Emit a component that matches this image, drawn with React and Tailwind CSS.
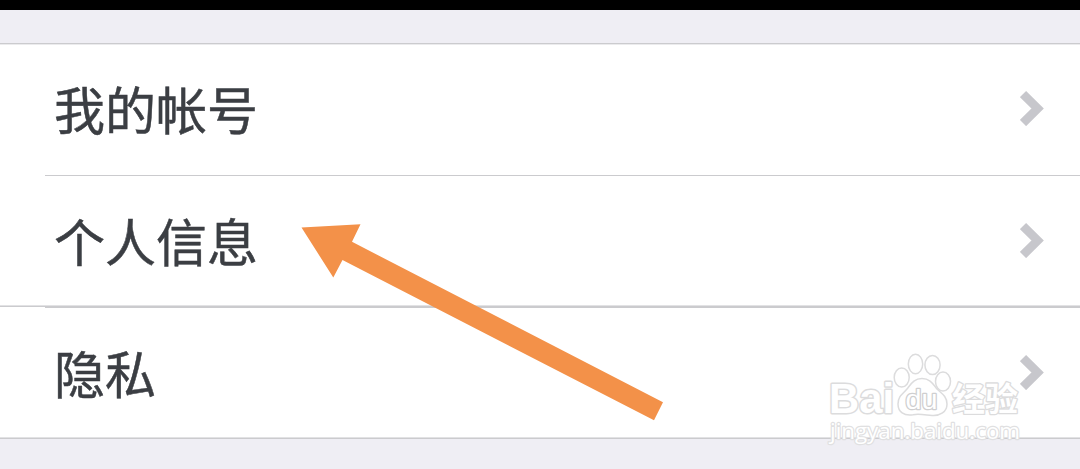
import React from "react";

const Chevron = () => (
  <svg className="h-9 w-6 mr-9 shrink-0 -mt-px" viewBox="0 0 24 36" fill="none">
    <path d="M3 4L17.6 18.5L3 33" stroke="#c7c7cc" strokeWidth="8.8" />
  </svg>
);

const Row = ({ label }) => (
  <div className="flex flex-1 items-center justify-between pl-[54px] text-[51px] leading-none text-[#3b3e43]">
    <span className="-mt-px [-webkit-text-stroke:0.5px_#3b3e43]">{label}</span>
    <Chevron />
  </div>
);

const Arrow = () => (
  <svg
    className="absolute left-[290px] top-[215px] h-[215px] w-[385px]"
    viewBox="290 215 385 215"
  >
    <path
      d="M301.5 227.5L360.5 224.3L352 241.8L663 402.3L654 420.3L342.5 260L333.3 277.5Z"
      fill="#f39149"
    />
  </svg>
);

const Watermark = () => (
  <svg
    className="absolute left-[820px] top-[345px] h-[110px] w-[210px]"
    viewBox="820 345 210 110"
    fill="#fff"
    stroke="#dcdcdd"
    strokeWidth="1.5"
    strokeLinejoin="round"
  >
    <ellipse cx="901.7" cy="377.5" rx="7.5" ry="9.5" />
    <ellipse cx="915.5" cy="364" rx="7.2" ry="9.7" />
    <ellipse cx="932.5" cy="365" rx="7.6" ry="9.5" />
    <ellipse cx="943" cy="381.5" rx="7.5" ry="9.5" />
    <path d="M922 378.5C930 378.5 933 384 937 389C941 393 947 396 947 404C947 412 940 416 932 415.4C926 415 919 413.5 913 414.7C904 416 898 412 898 404C898 396 903 394 907 389C911 384 914 378.5 922 378.5Z" />
    <text
      x="829"
      y="413"
      fontSize="42"
      fontWeight="700"
      textLength="65"
      lengthAdjust="spacingAndGlyphs"
      fontFamily="'Liberation Sans', Arial, sans-serif"
      strokeWidth="3"
      paintOrder="stroke"
    >
      Bai
    </text>
    <text
      x="905.5"
      y="408.5"
      fontSize="28"
      textLength="32"
      lengthAdjust="spacingAndGlyphs"
      fontFamily="'Liberation Sans', Arial, sans-serif"
      stroke="#cfcfd0"
      strokeWidth="2.6"
      paintOrder="stroke"
    >
      du
    </text>
    <text
      x="952"
      y="411"
      fontSize="33"
      fontWeight="700"
      fontFamily="'Noto Sans CJK SC', sans-serif"
      strokeWidth="2.6"
      paintOrder="stroke"
    >
      经验
    </text>
    <text
      x="830"
      y="439"
      fontSize="22.5"
      textLength="190"
      lengthAdjust="spacingAndGlyphs"
      fontFamily="'Open Sans', sans-serif"
      stroke="#e0e0e1"
      strokeWidth="2.4"
      paintOrder="stroke"
    >
      jingyan.baidu.com
    </text>
  </svg>
);

const App = () => {
  return (
    <main className="relative flex h-[469px] w-full flex-col overflow-hidden bg-[#efeef4] font-['Noto_Sans_CJK_SC',sans-serif]">
      <div className="h-2.5 bg-black"></div>
      <section className="mt-[33px] flex h-[396px] flex-col border-y border-[#cbcbce] bg-white">
        <div className="h-px bg-[#ebebed]"></div>
        <div className="flex h-[130px] pb-[3px]">
          <Row label="我的帐号" />
        </div>
        <div className="ml-[45px] h-px bg-[#cbcbce]"></div>
        <div className="flex h-[129px]">
          <Row label="个人信息" />
        </div>
        <div className="h-px bg-[#e2e2e4]"></div>
        <div className="h-px bg-[#cbcbce]"></div>
        <div className="ml-[45px] h-px bg-[#cbcbce]"></div>
        <div className="flex h-[129px]">
          <Row label="隐私" />
        </div>
        <div className="h-px bg-[#e2e2e4]"></div>
      </section>
      <Arrow />
      <Watermark />
    </main>
  );
};

export default App;
